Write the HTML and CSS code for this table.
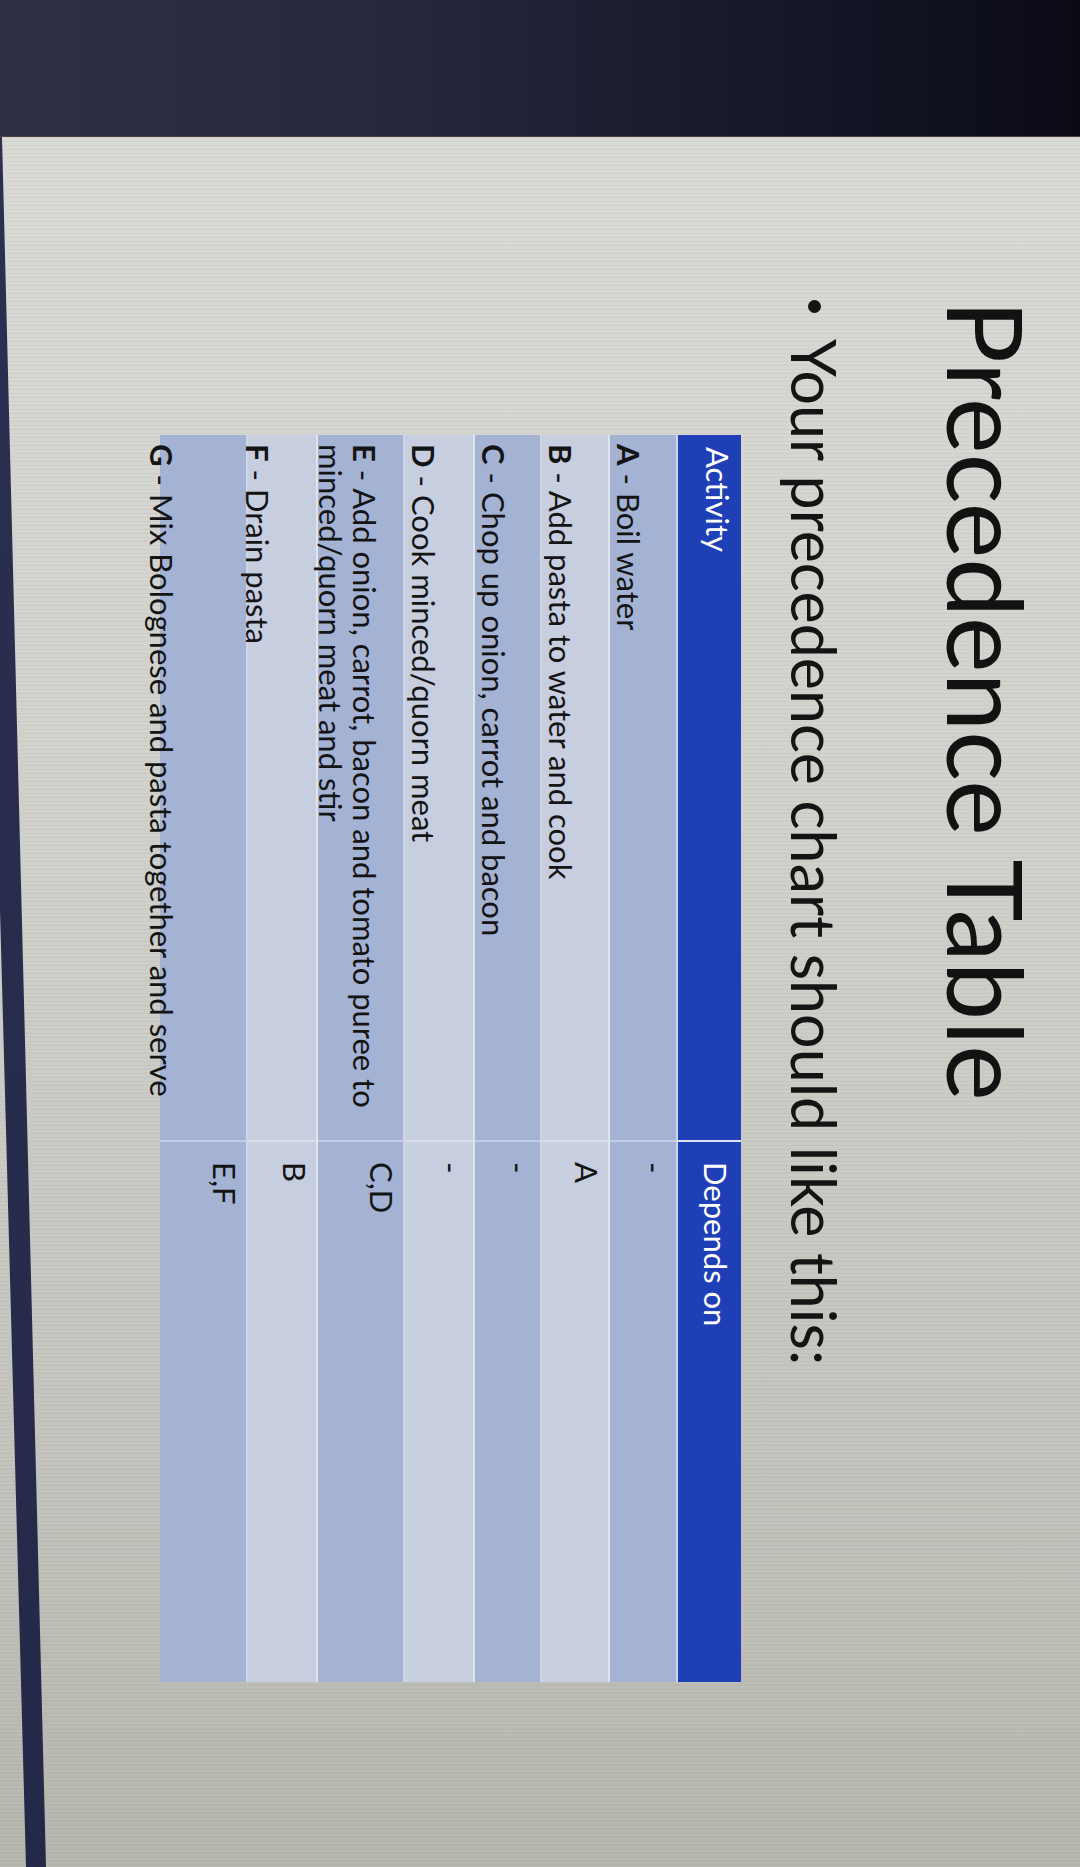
FILE: index.html
```html
<!DOCTYPE html>
<html lang="en">
<head>
<meta charset="utf-8">
<title>Precedence Table</title>
<link rel="stylesheet" href="styles.css">
</head>
<body>
<div class="bezel-top"></div>
<div class="display">
  <div class="slide">
    <h1 class="title">Precedence Table</h1>
    <p class="bullet"><span class="dot"></span><span>Your precedence chart should like this:</span></p>
    <div class="ptable">
      <div class="row head">
        <div class="cell act"><span class="txt">Activity</span></div>
        <div class="cell dep">Depends on</div>
      </div>
      <div class="row med row-a">
        <div class="cell act"><span class="txt"><b>A</b> - Boil water</span></div>
        <div class="cell dep">-</div>
      </div>
      <div class="row light row-b">
        <div class="cell act"><span class="txt"><b>B</b> - Add pasta to water and cook</span></div>
        <div class="cell dep">A</div>
      </div>
      <div class="row med row-c">
        <div class="cell act"><span class="txt"><b>C</b> - Chop up onion, carrot and bacon</span></div>
        <div class="cell dep">-</div>
      </div>
      <div class="row light row-d">
        <div class="cell act"><span class="txt"><b>D</b> - Cook minced/quorn meat</span></div>
        <div class="cell dep">-</div>
      </div>
      <div class="row med row-e">
        <div class="cell act"><span class="txt"><b>E</b> - Add onion, carrot, bacon and tomato puree to<br>minced/quorn meat and stir</span></div>
        <div class="cell dep">C,D</div>
      </div>
      <div class="row light row-f">
        <div class="cell act"><span class="txt"><b>F</b> - Drain pasta</span></div>
        <div class="cell dep">B</div>
      </div>
      <div class="row med row-g">
        <div class="cell act"><span class="txt"><b>G</b> - Mix Bolognese and pasta together and serve</span></div>
        <div class="cell dep">E,F</div>
      </div>
    </div>
  </div>
  <div class="edge-strip"></div>
</div>
</body>
</html>
```

FILE: styles.css
```css
html, body {
  margin: 0;
  padding: 0;
}

body {
  width: 1080px;
  height: 1867px;
  overflow: hidden;
  background: #1a1b2c;
  font-family: Lato, "Noto Sans", sans-serif;
  color: #141414;
}

.bezel-top {
  height: 136px;
  background: linear-gradient(to right, #2e3048 0%, #26283f 35%, #17182a 70%, #0b0b16 100%);
  border-bottom: 1px solid #4e3c46;
}

.display {
  position: relative;
  height: 1730px;
  overflow: hidden;
  background:
    repeating-linear-gradient(to bottom, rgba(0, 0, 0, 0.035) 0 1px, rgba(255, 255, 255, 0.04) 1px 2px, transparent 2px 4px),
    linear-gradient(to bottom, #d9dad5 0%, #d0d1cb 40%, #c3c4bd 75%, #b6b6ae 100%);
}

.slide {
  width: 1730px;
  height: 1080px;
  box-sizing: border-box;
  padding-left: 163px;
  transform-origin: 0 0;
  transform: translateX(1080px) rotate(90deg);
}

.title {
  margin: 0;
  padding-top: 40px;
  font-size: 105px;
  line-height: 105px;
  font-weight: 400;
  color: #121212;
  white-space: nowrap;
}

.bullet {
  margin: 90px 0 0 0;
  height: 61px;
  display: flex;
  align-items: center;
  font-size: 61px;
  line-height: 61px;
  white-space: nowrap;
  color: #141414;
}

.dot {
  width: 13px;
  height: 13px;
  border-radius: 50%;
  background: #141414;
  margin-right: 26px;
  flex: none;
}

.ptable {
  margin: 43px 0 0 135px;
  width: 1247px;
  font-size: 31px;
  line-height: 34px;
}

.row {
  display: flex;
  box-sizing: border-box;
}

.row + .row {
  border-top: 2px solid rgba(255, 255, 255, 0.45);
}

.head { height: 63px; background: #1f3fb6; color: #fff; }
.row-a { height: 68px; }
.row-b { height: 68px; }
.row-c { height: 67px; }
.row-d { height: 70px; }
.row-e { height: 87px; }
.row-f { height: 70px; }
.row-g { height: 88px; }

.med { background: #a4b2d4; }
.light { background: #c7cedf; }

.cell {
  box-sizing: border-box;
  white-space: nowrap;
}

.act {
  width: 705px;
  flex: none;
  display: flex;
  align-items: flex-end;
  padding: 0 0 2px 9px;
}

.dep {
  flex: 1;
  padding: 4px 0 0 20px;
  border-left: 2px solid rgba(255, 255, 255, 0.35);
}

.txt b { font-weight: 700; }

.head .act {
  align-items: flex-start;
  padding: 6px 0 0 12px;
}

.head .dep {
  padding-top: 8px;
  border-left-color: rgba(255, 255, 255, 0.85);
}

.row-e .act { padding-bottom: 0; }
.row-e .txt { margin-bottom: -4px; }
.row-f .act { padding-bottom: 0; }
.row-f .txt { margin-bottom: -7px; }
.row-g .act { padding-bottom: 0; }
.row-g .txt { margin-bottom: -15px; }

.edge-strip {
  position: absolute;
  inset: 0;
  background: linear-gradient(to bottom, #2c3050, #242849);
  clip-path: polygon(-21px 0, 2px 0, 46px 100%, 26px 100%);
  pointer-events: none;
}
```
